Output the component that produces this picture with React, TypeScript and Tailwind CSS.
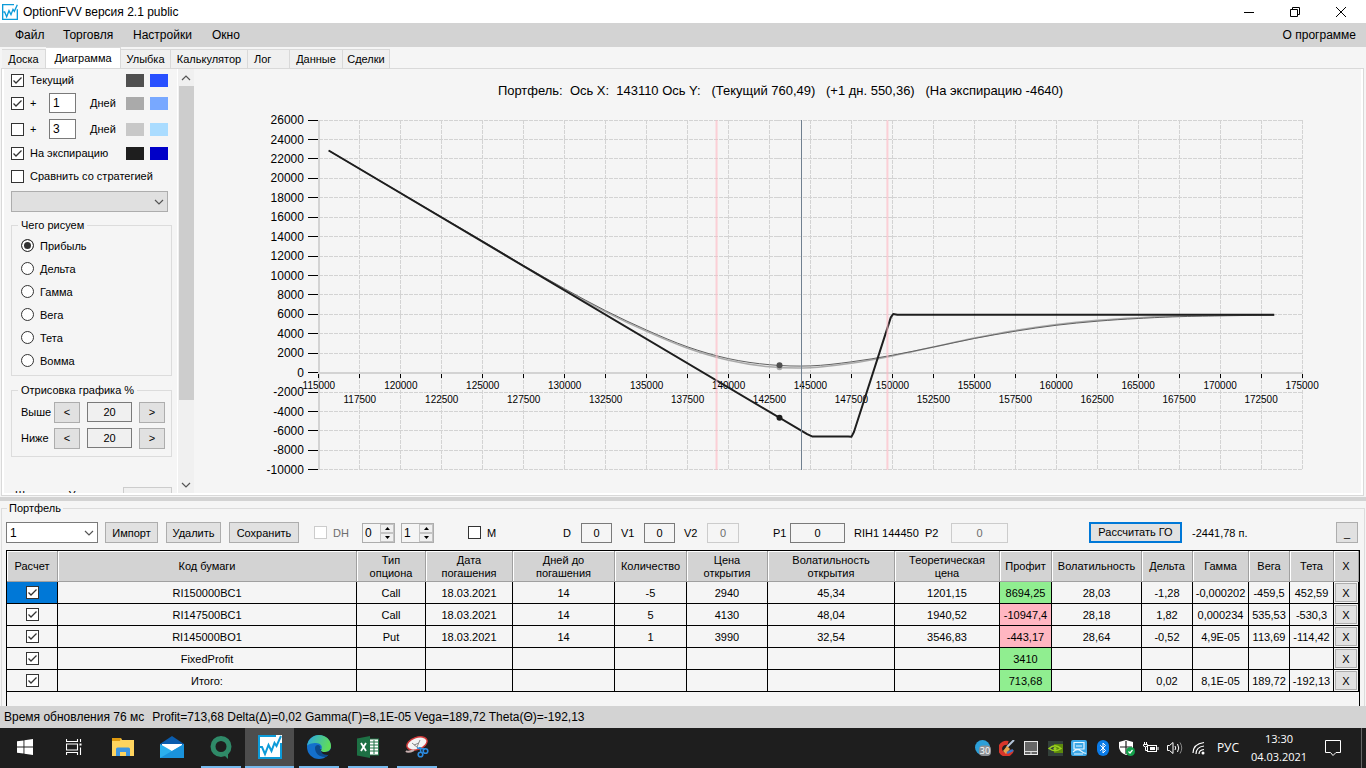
import React, { useState } from 'react';
import { Bluetooth } from 'lucide-react';

type Point = [number, number];

const tabs = [
  { name: 'Доска', className: 'w-[44px]' },
  { name: 'Диаграмма', className: 'w-[75px]' },
  { name: 'Улыбка', className: 'w-[50px]' },
  { name: 'Калькулятор', className: 'w-[77px]' },
  { name: 'Лог', className: 'w-[42px] text-left pl-[6px]' },
  { name: 'Данные', className: 'w-[53px]' },
  { name: 'Сделки', className: 'w-[47px]' },
];

const drawModes = ['Прибыль', 'Дельта', 'Гамма', 'Вега', 'Тета', 'Вомма'];

const columns = [
  { title: 'Расчет', className: 'w-[51px]' },
  { title: 'Код бумаги', className: '' },
  { title: 'Тип\nопциона', className: 'w-[69px]' },
  { title: 'Дата\nпогашения', className: 'w-[87px]' },
  { title: 'Дней до\nпогашения', className: 'w-[102px]' },
  { title: 'Количество', className: 'w-[72px]' },
  { title: 'Цена\nоткрытия', className: 'w-[81px]' },
  { title: 'Волатильность\nоткрытия', className: 'w-[127px]' },
  { title: 'Теоретическая\nцена', className: 'w-[105px]' },
  { title: 'Профит', className: 'w-[52px]' },
  { title: 'Волатильность', className: 'w-[90px]' },
  { title: 'Дельта', className: 'w-[51px]' },
  { title: 'Гамма', className: 'w-[56px]' },
  { title: 'Вега', className: 'w-[41px]' },
  { title: 'Тета', className: 'w-[44px]' },
  { title: 'X', className: 'w-[25px]' },
];

const PROFIT_COLUMN = 8;

const rows = [
  ['RI150000BC1', 'Call', '18.03.2021', '14', '-5', '2940', '45,34', '1201,15', '8694,25', '28,03', '-1,28', '-0,000202', '-459,5', '452,59'],
  ['RI147500BC1', 'Call', '18.03.2021', '14', '5', '4130', '48,04', '1940,52', '-10947,4', '28,18', '1,82', '0,000234', '535,53', '-530,3'],
  ['RI145000BO1', 'Put', '18.03.2021', '14', '1', '3990', '32,54', '3546,83', '-443,17', '28,64', '-0,52', '4,9E-05', '113,69', '-114,42'],
  ['FixedProfit', '', '', '', '', '', '', '', '3410', '', '', '', '', ''],
  ['Итого:', '', '', '', '', '', '', '', '713,68', '', '0,02', '8,1E-05', '189,72', '-192,13'],
];

// Chart geometry
const PLOT = { left: 125, top: 51, width: 984, height: 350 };
const X_MIN = 115000;
const X_MAX = 175000;
const Y_MIN = -10000;
const Y_MAX = 26000;

const toX = (v: number) => PLOT.left + ((v - X_MIN) / (X_MAX - X_MIN)) * PLOT.width;
const toY = (v: number) => PLOT.top + ((Y_MAX - v) / (Y_MAX - Y_MIN)) * PLOT.height;

const xTicks = Array.from({ length: 25 }, (_, i) => X_MIN + i * 2500);
const yTicks = Array.from({ length: 19 }, (_, i) => Y_MAX - i * 2000);

const expiration: Point[] = [
  [115600, 22870], [144800, -6330], [145100, -6560], [147300, -6560], [147500, -6600],
  [147650, -6100], [149900, 5700], [150050, 6050], [150300, 5970], [173300, 5970],
];

const current: Point[] = [
  [115600, 22870], [120000, 18480], [125000, 13540], [127500, 11030], [130000, 8640],
  [132500, 6380], [135000, 4390], [137500, 2660], [140000, 1450], [142500, 820],
  [145000, 700], [147500, 1120], [150000, 1800], [152500, 2640], [155000, 3520],
  [157500, 4270], [160000, 4880], [162500, 5300], [165000, 5580], [168000, 5790],
  [173300, 5930],
];

const nextDay: Point[] = [
  [115600, 22870], [120000, 18480], [125000, 13520], [127500, 10990], [130000, 8560],
  [132500, 6270], [135000, 4250], [137500, 2510], [140000, 1280], [142500, 610],
  [145000, 510], [147500, 980], [150000, 1730], [152500, 2650], [155000, 3570],
  [157500, 4350], [160000, 4960], [162500, 5390], [165000, 5660], [168000, 5850],
  [173300, 5950],
];

const linePath = (points: Point[]) =>
  points.map(([x, y], i) => `${i ? 'L' : 'M'}${toX(x).toFixed(1)} ${toY(y).toFixed(1)}`).join(' ');

// Catmull-Rom spline through the points
const smoothPath = (points: Point[]) => {
  const p = points.map(([x, y]) => [toX(x), toY(y)]);
  let d = `M${p[0][0]} ${p[0][1]}`;
  for (let i = 0; i < p.length - 1; i++) {
    const a = p[i - 1] || p[i];
    const b = p[i];
    const c = p[i + 1];
    const e = p[i + 2] || c;
    d += ` C${b[0] + (c[0] - a[0]) / 6} ${b[1] + (c[1] - a[1]) / 6} ${c[0] - (e[0] - b[0]) / 6} ${c[1] - (e[1] - b[1]) / 6} ${c[0]} ${c[1]}`;
  }
  return d;
};

const Check: React.FC<React.InputHTMLAttributes<HTMLInputElement>> = (props) => (
  <span className="inline-grid size-[13px] shrink-0">
    <input
      type="checkbox"
      className="peer col-start-1 row-start-1 size-[13px] appearance-none border border-[#333] bg-white disabled:border-[#ccc]"
      {...props}
    />
    <svg viewBox="0 0 13 13" className="pointer-events-none invisible col-start-1 row-start-1 size-[13px] peer-checked:visible">
      <path d="M2.5 6.5 L5 9 L10.5 3.5" fill="none" stroke="#333" strokeWidth="1.3" />
    </svg>
  </span>
);

const Chevron: React.FC<{ className?: string }> = ({ className }) => (
  <svg viewBox="0 0 10 6" className={`h-[6px] w-[10px] ${className || ''}`}>
    <path d="M1 1 L5 5 L9 1" fill="none" stroke="#555" strokeWidth="1.2" />
  </svg>
);

const Logo: React.FC<{ className?: string }> = ({ className }) => (
  <svg viewBox="0 0 24 24" className={className}>
    <rect width="24" height="24" fill="#fff" />
    <path d="M18 1 H1 V23 H23 V8" fill="none" stroke="#0c9bd9" strokeWidth="2" />
    <path d="M2 12 H4 L7 19 L10.5 10 L13.5 16 L16.5 8 L18.5 11 L23 1" fill="none" stroke="#0c9bd9" strokeWidth="2" />
  </svg>
);

const Swatches: React.FC<{ first: string; second: string }> = ({ first, second }) => (
  <>
    <span className={`h-[13px] w-[18px] ${first}`} />
    <span className={`h-[13px] w-[18px] ${second}`} />
  </>
);

const rowGrid = 'grid grid-cols-[38px_41px_36px_24px_18px] items-center';
const dayInput = 'h-5 w-[27px] border border-[#7a7a7a] bg-white pl-[3px] text-[12px]';
const greyButton = 'border border-[#adadad] bg-[#e1e1e1]';
const fieldInput = 'h-5 border border-[#7a7a7a] bg-[#f5f5f5] text-center disabled:border-[#ccc] disabled:text-[#6d6d6d]';

const ShiftRow: React.FC<{ label: string }> = ({ label }) => (
  <div className="flex h-[26px] items-center">
    <label htmlFor={label} className="w-[33px]">{label}</label>
    <button aria-label={`${label} меньше`} className={`h-[21px] w-[26px] ${greyButton}`}>&lt;</button>
    <input id={label} defaultValue="20" className="ml-[7px] h-5 w-[45px] border border-[#7a7a7a] bg-[#f0f0f0] text-center" />
    <button aria-label={`${label} больше`} className={`ml-[7px] h-[21px] w-[26px] ${greyButton}`}>&gt;</button>
  </div>
);

const SettingsPanel = () => {
  const [mode, setMode] = useState('Прибыль');

  return (
    <aside className="flex w-[190px] shrink-0">
      <div className="min-w-0 flex-1 overflow-hidden pr-1 pl-[7px]">
        <div className={`${rowGrid} h-[22px]`}>
          <label className="col-span-3 flex items-center gap-[6px]"><Check defaultChecked />Текущий</label>
          <Swatches first="bg-[#505050]" second="bg-[#2850ff]" />
        </div>
        <div className={`${rowGrid} h-6`}>
          <label className="flex items-center gap-[6px]"><Check defaultChecked />+</label>
          <input aria-label="Дней, первая линия" defaultValue="1" className={dayInput} />
          <span>Дней</span>
          <Swatches first="bg-[#aaaaaa]" second="bg-[#78a8ff]" />
        </div>
        <div className={`${rowGrid} h-7`}>
          <label className="flex items-center gap-[6px]"><Check />+</label>
          <input aria-label="Дней, вторая линия" defaultValue="3" className={dayInput} />
          <span>Дней</span>
          <Swatches first="bg-[#c8c8c8]" second="bg-[#aadcff]" />
        </div>
        <div className={`${rowGrid} h-5`}>
          <label className="col-span-3 flex items-center gap-[6px]"><Check defaultChecked />На экспирацию</label>
          <Swatches first="bg-[#1e1e1e]" second="bg-[#0000c8]" />
        </div>
        <label className="flex h-[26px] items-center gap-[6px]"><Check />Сравнить со стратегией</label>
        <div className="relative mt-0.5 h-[21px] w-[157px]">
          <select aria-label="Стратегия" className="size-full appearance-none border border-[#adadad] bg-[#e0e0e0]" />
          <Chevron className="pointer-events-none absolute top-2 right-1" />
        </div>

        <fieldset className="mt-[5px] w-[161px] border border-[#dcdcdc] px-[9px] pt-px pb-[3px]">
          <legend className="-ml-[3px] h-4 px-[3px] leading-4">Чего рисуем</legend>
          {drawModes.map((name) => (
            <label key={name} className="flex h-[23px] items-center gap-[6px]">
              <input
                type="radio"
                name="mode"
                checked={mode === name}
                onChange={() => setMode(name)}
                className="size-[13px] appearance-none rounded-full border border-[#333] bg-white checked:bg-[#333] checked:shadow-[inset_0_0_0_2px_#fff]"
              />
              {name}
            </label>
          ))}
        </fieldset>

        <fieldset className="mt-[6px] w-[161px] border border-[#dcdcdc] pt-px pr-[5px] pb-[5px] pl-[9px]">
          <legend className="-ml-[3px] h-4 px-[3px] leading-4">Отрисовка графика %</legend>
          <ShiftRow label="Выше" />
          <ShiftRow label="Ниже" />
        </fieldset>

        <div className="mt-[30px] flex">
          <label htmlFor="step" className="w-28 pl-1 leading-4">Шаг сетки У</label>
          <input id="step" disabled defaultValue="2500" className="h-5 w-[49px] border border-[#ccc] bg-[#f0f0f0] pl-[3px] text-[#6d6d6d]" />
        </div>
      </div>
      <div className="flex w-[17px] flex-col items-center border-l border-white bg-[#f0f0f0]">
        <div className="flex h-[17px] items-center"><Chevron className="rotate-180" /></div>
        <div className="h-[314px] w-[15px] bg-[#cdcdcd]" />
        <div className="mt-auto flex h-[17px] items-center"><Chevron /></div>
      </div>
    </aside>
  );
};

const ProfitChart = () => (
  <svg viewBox="0 0 1168 424" className="h-full min-w-0 flex-1 font-['Liberation_Sans',Arial,sans-serif]">
    <text x="587" y="26" fontSize="13" textAnchor="middle" className="whitespace-pre">
      {'Портфель:  Ось X:  143110 Ось Y:   (Текущий 760,49)   (+1 дн. 550,36)   (На экспирацию -4640)'}
    </text>
    <g stroke="#d3d3d3" strokeDasharray="4 1" shapeRendering="crispEdges">
      {yTicks.map((v) => (
        <line key={v} x1={PLOT.left} x2={PLOT.left + PLOT.width} y1={toY(v)} y2={toY(v)} />
      ))}
      {xTicks.map((v) => (
        <line key={v} x1={toX(v)} x2={toX(v)} y1={PLOT.top} y2={PLOT.top + PLOT.height} />
      ))}
    </g>
    <g stroke="#d3d3d3" strokeWidth="2" shapeRendering="crispEdges">
      <line x1={PLOT.left} x2={PLOT.left} y1={PLOT.top} y2={PLOT.top + PLOT.height} />
      <line x1={PLOT.left} x2={PLOT.left + PLOT.width} y1={toY(0)} y2={toY(0)} />
    </g>
    <g stroke="#000" shapeRendering="crispEdges">
      {yTicks.map((v) => (
        <line key={v} x1={PLOT.left - 11} x2={PLOT.left - 1} y1={toY(v)} y2={toY(v)} />
      ))}
      {xTicks.map((v) => (
        <line key={v} x1={toX(v)} x2={toX(v)} y1={toY(0) + 1} y2={toY(0) + 5} />
      ))}
    </g>
    <g fontSize="12" textAnchor="end">
      {yTicks.map((v) => (
        <text key={v} x="110" y={toY(v) + 4}>{v}</text>
      ))}
    </g>
    <g fontSize="10" textAnchor="middle">
      {xTicks.map((v, i) => (
        <text key={v} x={toX(v)} y={i % 2 ? 334 : 320}>{v}</text>
      ))}
    </g>
    <path d={smoothPath(nextDay)} fill="none" stroke="#aaaaaa" strokeWidth="1.5" />
    <path d={smoothPath(current)} fill="none" stroke="#606060" strokeWidth="1" />
    <path d={linePath(expiration)} fill="none" stroke="#1e1e1e" strokeWidth="2" strokeLinejoin="round" />
    <circle cx={toX(143110)} cy={toY(550)} r="3" fill="#aaaaaa" />
    <circle cx={toX(143110)} cy={toY(760)} r="3" fill="#505050" />
    <circle cx={toX(143110)} cy={toY(-4640)} r="3" fill="#1e1e1e" />
    <g stroke="#ffb6c1" strokeOpacity="0.6" strokeWidth="2">
      <line x1="523" x2="523" y1={PLOT.top} y2={PLOT.top + PLOT.height} />
      <line x1="694" x2="694" y1={PLOT.top} y2={PLOT.top + PLOT.height} />
    </g>
    <line x1="608" x2="608" y1={PLOT.top} y2={PLOT.top + PLOT.height} stroke="#708090" shapeRendering="crispEdges" />
  </svg>
);

const Spinner: React.FC<{ label: string; value: string }> = ({ label, value }) => (
  <div className="flex h-5 w-[33px] border border-[#adadad]">
    <input aria-label={label} defaultValue={value} className="w-[17px] bg-transparent pl-[2px] text-[12px]" />
    <span className="flex w-[14px] flex-col">
      <button aria-label={`${label} +`} className="flex h-[9px] items-center justify-center border border-[#c4c4c4] bg-[#f0f0f0]">
        <svg viewBox="0 0 5 3" className="h-[3px] w-[5px]"><path d="M0 3 L2.5 0 L5 3 Z" /></svg>
      </button>
      <button aria-label={`${label} −`} className="flex h-[9px] items-center justify-center border border-[#c4c4c4] bg-[#f0f0f0]">
        <svg viewBox="0 0 5 3" className="h-[3px] w-[5px]"><path d="M0 0 L2.5 3 L5 0 Z" /></svg>
      </button>
    </span>
  </div>
);

const Toolbar = () => (
  <div className="flex h-[35px] items-center">
    <div className="relative h-[21px] w-[92px]">
      <select aria-label="Портфель" className="size-full appearance-none border border-[#7a7a7a] bg-white pl-[3px] text-[12px]">
        <option>1</option>
      </select>
      <Chevron className="pointer-events-none absolute top-2 right-1" />
    </div>
    <button className={`ml-[7px] h-[21px] w-[53px] ${greyButton}`}>Импорт</button>
    <button className={`ml-2 h-[21px] w-[55px] ${greyButton}`}>Удалить</button>
    <button className={`ml-2 h-[21px] w-[70px] ${greyButton}`}>Сохранить</button>
    <label className="ml-[15px] flex w-12 items-center gap-[6px] text-[#6d6d6d]"><Check disabled />DH</label>
    <Spinner label="DH от" value="0" />
    <div className="w-[6px]" />
    <Spinner label="DH до" value="1" />
    <label className="ml-[34px] flex w-[95px] items-center gap-[6px]"><Check />M</label>
    <label htmlFor="d" className="w-[18px]">D</label>
    <input id="d" defaultValue="0" className={`w-[31px] ${fieldInput}`} />
    <label htmlFor="v1" className="ml-[9px] w-[23px]">V1</label>
    <input id="v1" defaultValue="0" className={`w-[31px] ${fieldInput}`} />
    <label htmlFor="v2" className="ml-[9px] w-[23px]">V2</label>
    <input id="v2" disabled defaultValue="0" className={`w-[32px] ${fieldInput}`} />
    <label htmlFor="p1" className="ml-[34px] w-[17px]">P1</label>
    <input id="p1" defaultValue="0" className={`w-[55px] ${fieldInput}`} />
    <span className="ml-[9px] w-[71px] whitespace-nowrap">RIH1 144450</span>
    <label htmlFor="p2" className="w-[26px]">P2</label>
    <input id="p2" disabled defaultValue="0" className={`w-[57px] ${fieldInput}`} />
    <button className="ml-[81px] h-[21px] w-[93px] border-2 border-[#0078d7] bg-[#e1e1e1] leading-none">Рассчитать ГО</button>
    <span className="ml-[10px]">-2441,78 п.</span>
    <button aria-label="Свернуть панель" className={`mr-[2px] ml-auto h-[21px] w-[22px] ${greyButton}`}>_</button>
  </div>
);

const PositionsTable = () => (
  <div className="border-x border-t border-black pb-[14px]">
    <table className="w-full table-fixed border-separate border-spacing-0 text-center">
      <thead>
        <tr className="h-[31px] bg-[#d3d3d3]">
          {columns.map((column, index) => (
            <th
              key={index}
              className={`border-r border-b border-[#a0a0a0] p-0 pt-px text-[11px] leading-[13px] font-normal whitespace-pre-line shadow-[inset_1px_1px_0_#fff] ${column.className}`}
            >
              {column.title}
            </th>
          ))}
        </tr>
      </thead>
      <tbody>
        {rows.map((row, index) => (
          <tr key={row[0]} className="h-[22px]">
            <td className={`border-r border-b border-black p-0 ${index === 0 ? 'bg-[#0078d7]' : ''}`}>
              <div className="flex justify-center"><Check defaultChecked aria-label={row[0]} /></div>
            </td>
            {row.map((cell, i) => (
              <td
                key={i}
                className={`border-r border-b border-black p-0 whitespace-nowrap ${
                  i !== PROFIT_COLUMN ? '' : cell.startsWith('-') ? 'bg-[#ffb6c1]' : 'bg-[#90ee90]'
                }`}
              >
                {cell}
              </td>
            ))}
            <td className="border-r border-b border-black p-0">
              <button aria-label={`Удалить ${row[0]}`} className={`mx-auto block h-[19px] w-[22px] ${greyButton}`}>X</button>
            </td>
          </tr>
        ))}
      </tbody>
    </table>
  </div>
);

const TaskButton: React.FC<{ label: string; open?: boolean; active?: boolean; children: React.ReactNode }> = ({ label, open, active, children }) => (
  <button aria-label={label} className={`flex h-10 w-[49px] flex-col items-center ${active ? 'bg-[#4d4d4d]' : ''}`}>
    <span className="flex flex-1 items-center">{children}</span>
    <span className={`h-0.5 ${active ? 'w-full' : 'w-10'} ${open ? 'bg-[#76b9ed]' : ''}`} />
  </button>
);

const TrayIcon: React.FC<{ children: React.ReactNode }> = ({ children }) => (
  <span className="flex w-6 justify-center">{children}</span>
);

const Taskbar = () => (
  <footer className="flex h-10 shrink-0 items-center bg-[#1e1e1e] font-['Open_Sans',sans-serif] text-[12px] text-white">
    <TaskButton label="Пуск">
      <svg viewBox="0 0 16 16" className="size-4" fill="#fff">
        <path d="M0 2.3 L6.5 1.4 V7.5 H0 Z M7.4 1.2 L16 0 V7.5 H7.4 Z M0 8.5 H6.5 V14.6 L0 13.7 Z M7.4 8.5 H16 V16 L7.4 14.8 Z" />
      </svg>
    </TaskButton>
    <TaskButton label="Представление задач">
      <svg viewBox="0 0 16 16" className="size-4" fill="none" stroke="#fff" strokeWidth="1.1">
        <path d="M0.5 0 V2.5 H11.5 V0 M0.5 16 V13.5 H11.5 V16 M0.5 5 H11.5 V11 H0.5 Z M14.5 0 V3 M14.5 8.5 V16" />
        <rect x="13.5" y="4.5" width="2" height="2" fill="#fff" stroke="none" />
      </svg>
    </TaskButton>
    <TaskButton label="Проводник">
      <svg viewBox="0 0 22 18" className="h-[18px] w-[22px]">
        <path d="M0 0 H9 L10 2 H22 V18 H0 Z" fill="#ffd45e" />
        <path d="M0 0 H9 L8 3 H0 Z" fill="#e09b10" />
        <path d="M4 18 V11 Q4 9.5 5.5 9.5 H16.5 Q18 9.5 18 11 V18 H14 V14 H8 V18 Z" fill="#3f96e0" />
      </svg>
    </TaskButton>
    <TaskButton label="Почта">
      <svg viewBox="0 0 24 22" className="h-[22px] w-6">
        <path d="M0 8 L12 0 L24 8 V14 H0 Z" fill="#0a5cad" />
        <path d="M2 8 H22 V14 L12 17 L2 14 Z" fill="#fff" />
        <path d="M0 8 L12 15 L24 8 V22 H0 Z" fill="#2bb0ee" />
        <path d="M0 22 L12 15 L24 8 V22 Z" fill="#1a93dc" />
      </svg>
    </TaskButton>
    <TaskButton label="QUIK" open>
      <svg viewBox="0 0 22 23" className="h-[23px] w-[22px]">
        <circle cx="11" cy="10.5" r="8" fill="none" stroke="#2f8a68" strokeWidth="5" />
        <path d="M12 17 H18 V23 Z" fill="#2f8a68" />
      </svg>
    </TaskButton>
    <TaskButton label="OptionFVV" open active>
      <Logo className="size-6" />
    </TaskButton>
    <TaskButton label="Edge" open>
      <svg viewBox="0 0 24 24" className="size-6">
        <defs>
          <linearGradient id="edge" x1="0" y1="0" x2="1" y2="0.3">
            <stop offset="0" stopColor="#2aa5e8" />
            <stop offset="1" stopColor="#5fdc5a" />
          </linearGradient>
        </defs>
        <circle cx="12" cy="12" r="12" fill="#1470cc" />
        <path d="M0 11 C1 4 6 0 12 0 C19 0 24 5 24 11 C24 15 21 17 17.5 17 C14 17 13.5 15.5 14.5 14 C16 11 13 8 9 8 C5 8 1 9 0 11 Z" fill="url(#edge)" />
        <path d="M8 13 C8 18 12 22 18 22 C20 22 21.5 20 22 18.5 C18 20 13.5 18.5 13 15 C12.8 13 14 12.5 13 11 C11 9 8 10.5 8 13 Z" fill="#0c4a8c" />
        <path d="M14.5 14 C13 16 15 17.5 18 17 C21 17 23 16 24 13.5 L24 19 L21 20 C16 20 13 17 13.5 14 Z" fill="#1e1e1e" />
      </svg>
    </TaskButton>
    <TaskButton label="Excel" open>
      <svg viewBox="0 0 22 22" className="size-[22px]">
        <rect x="12" y="3" width="9.5" height="16" fill="#fff" stroke="#217346" />
        <path d="M13 6 H21 M13 9 H21 M13 12 H21 M13 15 H21 M17 4 V18" stroke="#217346" />
        <path d="M0 2.5 L13 0 V22 L0 19.5 Z" fill="#1d7044" />
        <path d="M4 7 L9 15 M9 7 L4 15" stroke="#fff" strokeWidth="1.8" />
      </svg>
    </TaskButton>
    <TaskButton label="Ножницы" open>
      <svg viewBox="0 0 24 22" className="h-[22px] w-6">
        <ellipse cx="12" cy="7.5" rx="10.5" ry="6" transform="rotate(-20 12 7.5)" fill="#f4f4f4" stroke="#d03a3a" strokeWidth="1.4" />
        <path d="M1 15 Q3 17 9 14" fill="none" stroke="#c9b0b0" strokeWidth="2" />
        <path d="M7 7 L13 12 M15 4 L12 11 M9 9 L14 7" stroke="#888" strokeWidth="1" />
        <path d="M12 12 L20 13 M15 11 L16 17" stroke="#2b8be0" strokeWidth="1.5" />
        <circle cx="15.5" cy="18.5" r="2.3" fill="none" stroke="#2b8be0" strokeWidth="1.6" />
        <circle cx="20.5" cy="15" r="2.3" fill="none" stroke="#2b8be0" strokeWidth="1.6" />
      </svg>
    </TaskButton>

    <div className="ml-auto flex items-center">
      <TrayIcon>
        <svg viewBox="0 0 16 16" className="size-4">
          <circle cx="7.5" cy="7.5" r="7.5" fill="#2c9fd8" />
          <rect x="4" y="5.5" width="12" height="10.5" rx="4" fill="#8c9196" />
          <text x="10" y="14" fontSize="9" textAnchor="middle" fill="#fff">30</text>
        </svg>
      </TrayIcon>
      <TrayIcon>
        <svg viewBox="0 0 16 16" className="size-4">
          <path d="M13 10 A6 6 0 1 1 9 3" fill="none" stroke="#d8352a" strokeWidth="4" />
          <path d="M15 0 L8 7" stroke="#b5c4d8" strokeWidth="2" />
          <path d="M4 11 L8 6 L11 9 L7 14 Z" fill="#e8a64c" />
          <path d="M8 13 L14 10" stroke="#3a76c4" strokeWidth="2.5" />
        </svg>
      </TrayIcon>
      <TrayIcon>
        <svg viewBox="0 0 14 14" className="size-[14px]">
          <rect x="0.5" y="0.5" width="13" height="13" fill="#666" stroke="#e8e8e8" />
          <path d="M1 10.5 H13 M7 10.5 V13" stroke="#ddd" />
        </svg>
      </TrayIcon>
      <TrayIcon>
        <svg viewBox="0 0 15 15" className="size-[15px]">
          <rect width="15" height="15" fill="#33403a" />
          <path d="M6 3 H15 V12 H6 Z" fill="#5d8a0c" />
          <path d="M1 7.5 Q7 2 13 7.5 Q7 12 1 7.5 Z" fill="none" stroke="#9bd020" strokeWidth="1.4" />
          <circle cx="7" cy="7.5" r="1.6" fill="#9bd020" />
        </svg>
      </TrayIcon>
      <TrayIcon>
        <svg viewBox="0 0 16 16" className="size-4">
          <rect width="16" height="16" rx="2" fill="#3aa6e6" />
          <path d="M3 2.5 H13 V9 H3 Z M5 6 H11 M2 12 Q6 8 10 11 T15 13 M3 14 H12" fill="none" stroke="#e8f6ff" strokeWidth="1.2" />
        </svg>
      </TrayIcon>
      <TrayIcon>
        <span className="flex h-4 w-3 items-center justify-center rounded-full bg-[#0a7be8]"><Bluetooth size={12} /></span>
      </TrayIcon>
      <TrayIcon>
        <svg viewBox="0 0 16 16" className="size-4">
          <path d="M7 0 L14 2 V7 Q14 12 7 15 Q0 12 0 7 V2 Z" fill="#fff" />
          <path d="M7 1 V14 M1 7 H13" stroke="#1e1e1e" strokeWidth="1.2" />
          <circle cx="11.5" cy="11.5" r="4.5" fill="#12a04a" />
          <path d="M9.5 11.5 L11 13 L13.5 10" fill="none" stroke="#fff" strokeWidth="1.2" />
        </svg>
      </TrayIcon>
      <TrayIcon>
        <svg viewBox="0 0 16 12" className="h-3 w-4" fill="none" stroke="#fff">
          <rect x="4.5" y="3.5" width="9" height="6" />
          <rect x="7" y="5" width="5" height="3" fill="#fff" stroke="none" />
          <path d="M15 5 V8 M1.5 0 V2 M3.5 0 V2 M0.5 2.5 H4.5 V4 Q2.5 6 0.5 4 Z M2.5 5 V8.5 H4" />
        </svg>
      </TrayIcon>
      <TrayIcon>
        <svg viewBox="0 0 16 14" className="h-[14px] w-4" fill="none" stroke="#fff">
          <path d="M0.5 4.5 H2.5 L6 1.5 V12.5 L2.5 9.5 H0.5 Z M8 5 Q9.5 7 8 9" />
          <path d="M10.5 3 Q13 7 10.5 11" />
          <path d="M13 1.5 Q16.5 7 13 12.5" stroke="#888" />
        </svg>
      </TrayIcon>
      <TrayIcon>
        <svg viewBox="0 0 14 14" className="size-[14px]" fill="none" stroke="#fff">
          <path d="M7 13 Q7 9 12 8.5 M4 13 Q4 6 12 5 M1 12 Q1 3 12 1.5" strokeWidth="1.2" />
          <circle cx="11" cy="12" r="1.5" fill="#fff" stroke="none" />
        </svg>
      </TrayIcon>
      <span className="w-[34px] text-center">РУС</span>
      <span className="flex w-[68px] flex-col items-center text-[11px] leading-[18px]">
        <span>13:30</span>
        <span>04.03.2021</span>
      </span>
      <button aria-label="Уведомления" className="flex w-10 justify-center">
        <svg viewBox="0 0 16 16" className="size-4" fill="none" stroke="#fff">
          <path d="M0.5 0.5 H15.5 V12.5 H11 L8 15.5 L5.5 12.5 H0.5 Z" />
        </svg>
      </button>
      <span className="ml-2 h-10 w-[5px] border-l border-[#666]" />
    </div>
  </footer>
);

const App: React.FC = () => {
  const [tab, setTab] = useState('Диаграмма');

  return (
    <div className="flex h-screen flex-col bg-[#f5f5f5] font-['Liberation_Sans',Arial,sans-serif] text-[11px] leading-4 text-black">
      <header className="flex h-[23px] shrink-0 items-center bg-white text-[12px]">
        <Logo className="ml-[2px] size-4" />
        <h1 className="ml-[5px]">OptionFVV версия 2.1 public</h1>
        <div className="ml-auto flex items-center pr-[2px]">
          <button aria-label="Свернуть" className="flex w-[46px] justify-center">
            <svg viewBox="0 0 10 10" className="size-[10px]" stroke="#000"><path d="M0 5.5 H10" /></svg>
          </button>
          <button aria-label="Восстановить" className="flex w-[46px] justify-center">
            <svg viewBox="0 0 10 10" className="size-[10px]" fill="none" stroke="#000"><path d="M0.5 2.5 H7.5 V9.5 H0.5 Z M2.5 2.5 V0.5 H9.5 V7.5 H7.5" /></svg>
          </button>
          <button aria-label="Закрыть" className="flex w-[46px] justify-center">
            <svg viewBox="0 0 10 10" className="size-[10px]" fill="none" stroke="#000"><path d="M0 0 L10 10 M10 0 L0 10" /></svg>
          </button>
        </div>
      </header>

      <nav className="flex h-6 shrink-0 items-center bg-[#d3d3d3] pr-[10px] pl-[15px] text-[12px]">
        <button className="w-12 text-left">Файл</button>
        <button className="w-[70px] text-left">Торговля</button>
        <button className="w-[79px] text-left">Настройки</button>
        <button>Окно</button>
        <button className="ml-auto">О программе</button>
      </nav>

      <div role="tablist" className="flex h-[21px] shrink-0 items-end pl-[2px]">
        {tabs.map(({ name, className }) => (
          <button
            key={name}
            role="tab"
            aria-selected={tab === name}
            onClick={() => setTab(name)}
            className={`border-t border-r border-[#d9d9d9] ${className} ${
              tab === name ? 'h-[21px] bg-white' : 'h-[19px] bg-[#f0f0f0]'
            }`}
          >
            {name}
          </button>
        ))}
      </div>

      <main className="mr-[2px] ml-px flex min-h-0 flex-1 border border-[#d9d9d9]">
        <div className="flex min-w-0 flex-1 border-x-2 border-b-2 border-white">
          <SettingsPanel />
          <ProfitChart />
        </div>
      </main>

      <div className="mt-px h-1 shrink-0 bg-[#d3d3d3]" />

      <fieldset className="mx-px shrink-0 border-x border-t border-[#dcdcdc] px-1">
        <legend className="ml-px h-[14px] px-[2px] leading-[14px]">Портфель</legend>
        <Toolbar />
        <PositionsTable />
      </fieldset>

      <div className="flex h-[22px] shrink-0 items-center bg-[#d3d3d3] pl-1 text-[12px] whitespace-pre">
        <span>Время обновления 76 мс</span>
        <span className="ml-2">Profit=713,68 Delta(Δ)=0,02 Gamma(Γ)=8,1E-05 Vega=189,72 Theta(Θ)=-192,13</span>
      </div>

      <Taskbar />
    </div>
  );
};

export default App;
